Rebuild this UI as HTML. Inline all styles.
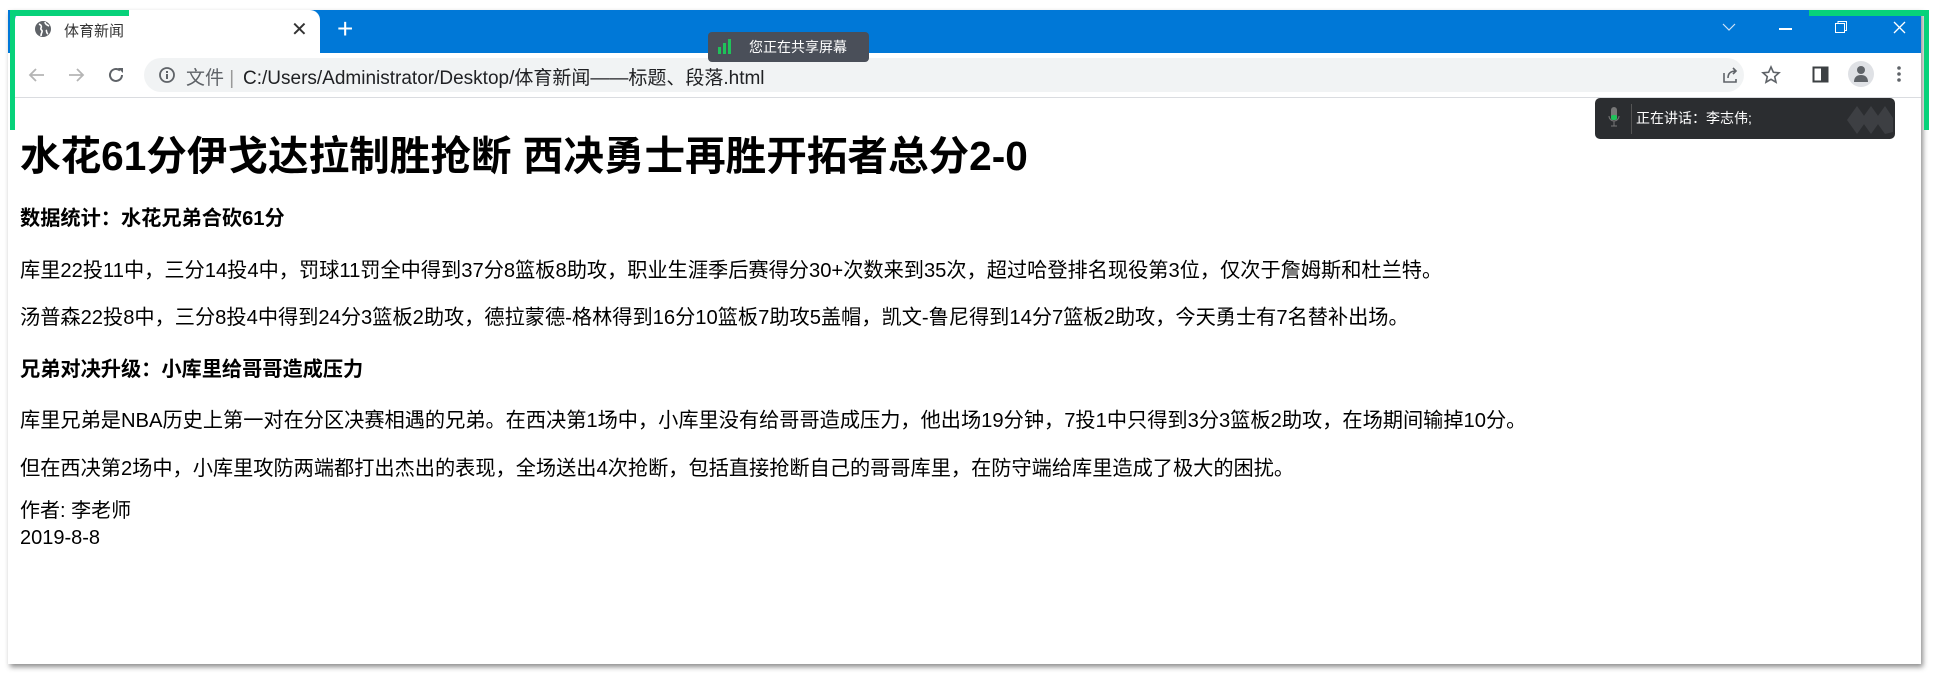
<!DOCTYPE html>
<html><head><meta charset="utf-8"><style>
*{margin:0;padding:0;box-sizing:border-box}
body{width:1940px;height:673px;background:#fff;position:relative;overflow:hidden;font-family:"Liberation Sans","Noto Sans CJK SC",sans-serif}
.a{position:absolute}
.t{position:absolute;white-space:nowrap;color:#000;font-family:"Liberation Sans","Noto Sans CJK SC",sans-serif}
</style></head><body>
<div class="a" style="left:8px;top:10px;width:1913px;height:654px;background:#fff;box-shadow:2px 3px 5px rgba(0,0,0,.45)"></div>
<div class="a" style="left:8px;top:10px;width:1913px;height:43px;background:#0078d7"></div>
<div class="a" style="left:15px;top:10px;width:305px;height:45px;background:#fff;border-radius:10px 10px 0 0"></div>
<svg class="a" style="left:34px;top:20px" width="18" height="18" viewBox="0 0 18 18"><circle cx="9" cy="9" r="8" fill="#5f6368"/><path d="M5 4c2 1 3 2 2 4s2 2 1 4-1 3-1 4M11 2c0 2 2 3 4 4M12 10c1 1 0 3 2 4" stroke="#fff" stroke-width="1.6" fill="none"/></svg>
<div class="t" style="left:64px;top:20px;font-size:15px;color:#333">体育新闻</div>
<div class="t" style="left:291px;top:17px;font-size:20px;color:#333">✕</div>
<div class="t" style="left:337px;top:13px;font-size:28px;color:#fff;font-weight:300">+</div>
<svg class="a" style="left:1722px;top:22px" width="14" height="10"><path d="M1 2l6 6 6-6" stroke="#cfe3f7" fill="none" stroke-width="1.2"/></svg>
<div class="a" style="left:1779px;top:28px;width:13px;height:1.5px;background:#fff"></div>
<svg class="a" style="left:1834px;top:20px" width="14" height="14"><rect x="1.5" y="3.5" width="9" height="9" stroke="#fff" fill="none"/><path d="M4 3.5V1.5h8.5v9h-2" stroke="#fff" fill="none"/></svg>
<svg class="a" style="left:1893px;top:21px" width="13" height="13"><path d="M1 1l11 11M12 1L1 12" stroke="#fff" stroke-width="1.3"/></svg>
<div class="a" style="left:15px;top:97px;width:1906px;height:1px;background:#dadce0"></div>
<svg class="a" style="left:27px;top:66px" width="20" height="18"><path d="M17 9H3M9 3L3 9l6 6" stroke="#b5b5b5" stroke-width="1.8" fill="none"/></svg>
<svg class="a" style="left:66px;top:66px" width="20" height="18"><path d="M3 9h14M11 3l6 6-6 6" stroke="#b5b5b5" stroke-width="1.8" fill="none"/></svg>
<svg class="a" style="left:107px;top:65px" width="20" height="20"><path d="M15 10a6 6 0 1 1-2-4.5" stroke="#5f6368" stroke-width="2" fill="none"/><path d="M11 3h5v5z" fill="#5f6368"/></svg>
<div class="a" style="left:144px;top:58px;width:1600px;height:34px;background:#f1f3f4;border-radius:17px"></div>
<svg class="a" style="left:158px;top:66px" width="18" height="18"><circle cx="9" cy="9" r="7" stroke="#5f6368" stroke-width="1.8" fill="none"/><rect x="8" y="8" width="2" height="5" fill="#5f6368"/><rect x="8" y="5" width="2" height="2" fill="#5f6368"/></svg>
<div class="t" style="left:186px;top:63px;font-size:19px;color:#5f6368">文件 <span style="color:#999">|</span></div>
<div class="t" style="left:243px;top:63px;font-size:19px;color:#202124">C:/Users/Administrator/Desktop/体育新闻——标题、段落.html</div>
<svg class="a" style="left:1720px;top:65px" width="20" height="20"><path d="M4 8v9h12v-3M8 13c0-5 3-7 8-7M13 3l3 3-3 3" stroke="#5f6368" stroke-width="1.6" fill="none"/></svg>
<svg class="a" style="left:1761px;top:65px" width="20" height="20"><path d="M10 2l2.4 5.3 5.6.5-4.3 3.8 1.3 5.6L10 14.3 5 17.2l1.3-5.6L2 7.8l5.6-.5z" stroke="#5f6368" stroke-width="1.6" fill="none"/></svg>
<svg class="a" style="left:1812px;top:65px" width="18" height="20"><rect x="1.5" y="2.5" width="14" height="14" stroke="#3c4043" stroke-width="2" fill="none"/><rect x="9" y="3" width="6" height="13" fill="#3c4043"/></svg>
<div class="a" style="left:1848px;top:61px;width:26px;height:26px;border-radius:50%;background:#dfe1e5"></div>
<svg class="a" style="left:1853px;top:65px" width="16" height="18"><circle cx="8" cy="5" r="4" fill="#5f6368"/><path d="M1 17c0-5 3-7 7-7s7 2 7 7z" fill="#5f6368"/></svg>
<svg class="a" style="left:1896px;top:64px" width="6" height="20"><circle cx="3" cy="4" r="1.8" fill="#5f6368"/><circle cx="3" cy="10" r="1.8" fill="#5f6368"/><circle cx="3" cy="16" r="1.8" fill="#5f6368"/></svg>
<div class="a" style="left:708px;top:32px;width:161px;height:30px;background:#4a4f59;border-radius:4px"></div>
<svg class="a" style="left:717px;top:38px" width="16" height="17"><rect x="1" y="9" width="3" height="7" fill="#1fc25a"/><rect x="6" y="5" width="3" height="11" fill="#1fc25a"/><rect x="11" y="1" width="3" height="15" fill="#1fc25a"/></svg>
<div class="t" style="left:749px;top:37px;font-size:14px;color:#fff">您正在共享屏幕</div>
<div class="a" style="left:1595px;top:98px;width:300px;height:41px;background:#2b2d30;border-radius:5px"></div>
<svg class="a" style="left:1608px;top:106px" width="12" height="24"><rect x="3" y="1" width="6" height="13" rx="3" fill="#777"/><rect x="3" y="9" width="6" height="5" rx="2" fill="#1fc25a"/><path d="M1 10a5 5 0 0 0 10 0M6 15v5M3 20h6" stroke="#777" fill="none"/></svg>
<div class="a" style="left:1631px;top:104px;width:1px;height:30px;background:#555"></div>
<div class="t" style="left:1636px;top:108px;font-size:14px;color:#fff">正在讲话：李志伟;</div>
<svg class="a" style="left:1843px;top:100px" width="50" height="38"><path d="M4 20l10-14 10 14-10 14zM18 20l10-14 10 14-10 14zM32 20l10-14 8 12v14l-8 2z" fill="#3d3f43"/></svg>
<div class="a" style="left:10px;top:10px;width:5px;height:120px;background:#07d27a"></div>
<div class="a" style="left:10px;top:10px;width:119px;height:6px;background:#07d27a"></div>
<div class="a" style="left:1809px;top:10px;width:120px;height:6px;background:#07d27a"></div>
<div class="a" style="left:1924px;top:10px;width:5px;height:120px;background:#07d27a"></div>
<div class="t" style="left:20px;top:131px;font-size:40.6px;font-weight:bold;line-height:50px">水花61分伊戈达拉制胜抢断 西决勇士再胜开拓者总分2-0</div>
<div class="t" style="left:20px;top:205px;font-size:20.2px;font-weight:bold;line-height:28px">数据统计：水花兄弟合砍61分</div>
<div class="t" style="left:20px;top:257px;font-size:20.2px;line-height:28px">库里22投11中，三分14投4中，罚球11罚全中得到37分8篮板8助攻，职业生涯季后赛得分30+次数来到35次，超过哈登排名现役第3位，仅次于詹姆斯和杜兰特。</div>
<div class="t" style="left:20px;top:304px;font-size:20.2px;line-height:28px">汤普森22投8中，三分8投4中得到24分3篮板2助攻，德拉蒙德-格林得到16分10篮板7助攻5盖帽，凯文-鲁尼得到14分7篮板2助攻，今天勇士有7名替补出场。</div>
<div class="t" style="left:20px;top:356px;font-size:20.2px;font-weight:bold;line-height:28px">兄弟对决升级：小库里给哥哥造成压力</div>
<div class="t" style="left:20px;top:407px;font-size:20.2px;line-height:28px">库里兄弟是NBA历史上第一对在分区决赛相遇的兄弟。在西决第1场中，小库里没有给哥哥造成压力，他出场19分钟，7投1中只得到3分3篮板2助攻，在场期间输掉10分。</div>
<div class="t" style="left:20px;top:455px;font-size:20.2px;line-height:28px">但在西决第2场中，小库里攻防两端都打出杰出的表现，全场送出4次抢断，包括直接抢断自己的哥哥库里，在防守端给库里造成了极大的困扰。</div>
<div class="t" style="left:20px;top:497px;font-size:20px;line-height:28px">作者: 李老师</div>
<div class="t" style="left:20px;top:524px;font-size:20px;line-height:28px">2019-8-8</div>
</body></html>
